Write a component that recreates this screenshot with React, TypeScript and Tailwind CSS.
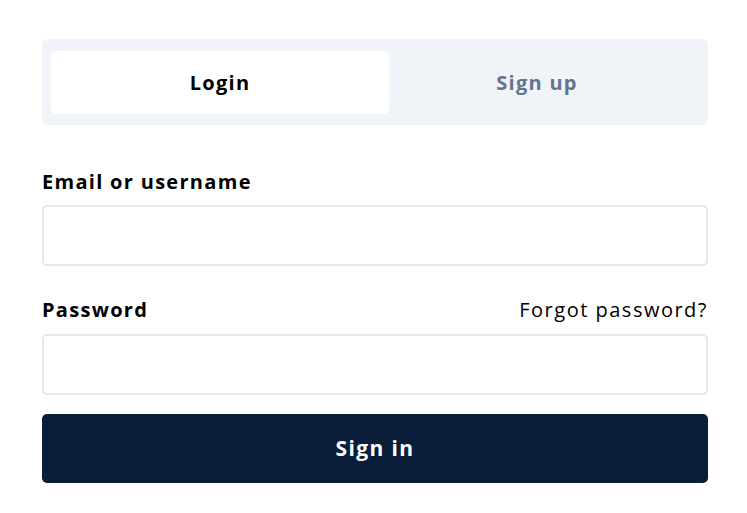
export default function App() {
  return (
    <div className="min-h-screen bg-white pl-[42px] pr-[39px] pt-[39px] text-black tracking-[1.3px]" style={{ fontFamily: "'Open Sans', 'Liberation Sans', sans-serif" }}>
      <div className="grid grid-cols-[338px_1fr] rounded-md bg-[#f0f3f8] pt-[12px] pb-[11px] pl-[9px] pr-[9px]">
        <button className="h-[63px] rounded-md bg-white text-[20px] font-bold tracking-[1.3px] text-black">Login</button>
        <button className="h-[63px] pr-[14px] text-[20px] font-bold tracking-[1.3px] text-[#64748b]">Sign up</button>
      </div>

      <label className="mt-[45px] block text-[20px] leading-[24px] font-bold">Email or username</label>
      <input className="mt-[11px] block h-[61px] w-full rounded-[5px] border-2 border-[#e2e8f0] bg-white px-4 text-[18px] outline-none" />

      <div className="mt-[32px] flex items-center justify-between text-[20px] leading-[24px]">
        <label className="font-bold">Password</label>
        <a className="tracking-[1.5px]">Forgot password?</a>
      </div>
      <input type="password" className="mt-[12px] block h-[61px] w-full rounded-[5px] border-2 border-[#e2e8f0] bg-white px-4 text-[18px] outline-none" />

      <button className="mt-[19px] block h-[69px] w-full rounded-[5px] bg-[#0a1e3a] text-[21px] font-bold tracking-[1.4px] text-white">Sign in</button>
    </div>
  );
}
